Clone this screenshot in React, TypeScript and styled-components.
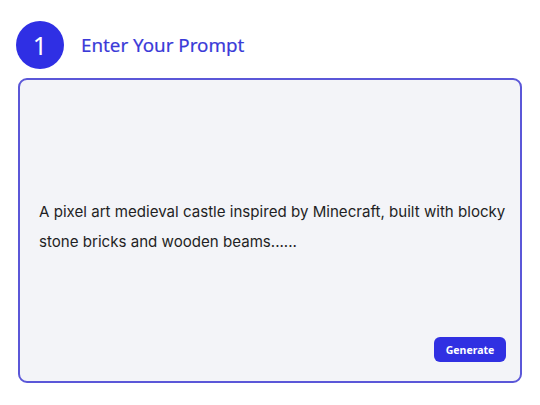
import React from "react";
import styled, { createGlobalStyle } from "styled-components";

const GlobalStyle = createGlobalStyle`
  html, body {
    margin: 0;
    padding: 0;
    background: #ffffff;
  }
`;

export default function App() {
  return (
    <>
      <GlobalStyle />
      <Page>
        <StepHeader>
          <StepNumber>1</StepNumber>
          <StepTitle>Enter Your Prompt</StepTitle>
        </StepHeader>
        <PromptBox>
          <PromptText>
            A pixel art medieval castle inspired by Minecraft, built with blocky
            stone bricks and wooden beams......
          </PromptText>
          <Actions>
            <GenerateButton>Generate</GenerateButton>
          </Actions>
        </PromptBox>
      </Page>
    </>
  );
}

//Styles
const Page = styled.div`
  width: 540px;
  height: 405px;
  box-sizing: border-box;
  padding: 21px 18px 22px 18px;
  display: flex;
  flex-direction: column;
  gap: 9px;
`;
const StepHeader = styled.div`
  display: flex;
  align-items: center;
  gap: 17px;
  margin-left: -2px;
`;
const StepNumber = styled.div`
  width: 48px;
  height: 48px;
  border-radius: 50%;
  background-color: #2f2fe4;
  color: #ffffff;
  display: flex;
  align-items: center;
  justify-content: center;
  font-family: "Noto Sans", sans-serif;
  font-size: 25px;
  font-weight: 400;
`;
const StepTitle = styled.h1`
  margin: 0;
  font-family: "Noto Sans", sans-serif;
  font-size: 18.8px;
  font-weight: 400;
  color: #3a3ad8;
  -webkit-text-stroke: 0.2px #3a3ad8;
`;
const PromptBox = styled.div`
  flex: 1;
  box-sizing: border-box;
  border: 2px solid #5b57d8;
  border-radius: 9px;
  background-color: #f3f4f8;
  display: flex;
  flex-direction: column;
  padding: 0 14px 19px 19px;
`;
const PromptText = styled.p`
  flex: 1;
  margin: 0;
  display: flex;
  align-items: center;
  font-family: Inter, sans-serif;
  font-size: 15.1px;
  line-height: 30px;
  color: #1f1f24;
  padding-top: 36px;
`;
const Actions = styled.div`
  display: flex;
  justify-content: flex-end;
`;
const GenerateButton = styled.button`
  width: 72px;
  height: 25px;
  border: none;
  border-radius: 6px;
  background-color: #3030e2;
  color: #ffffff;
  font-family: "Noto Sans", sans-serif;
  font-size: 10.5px;
  font-weight: 700;
  cursor: pointer;
`;
